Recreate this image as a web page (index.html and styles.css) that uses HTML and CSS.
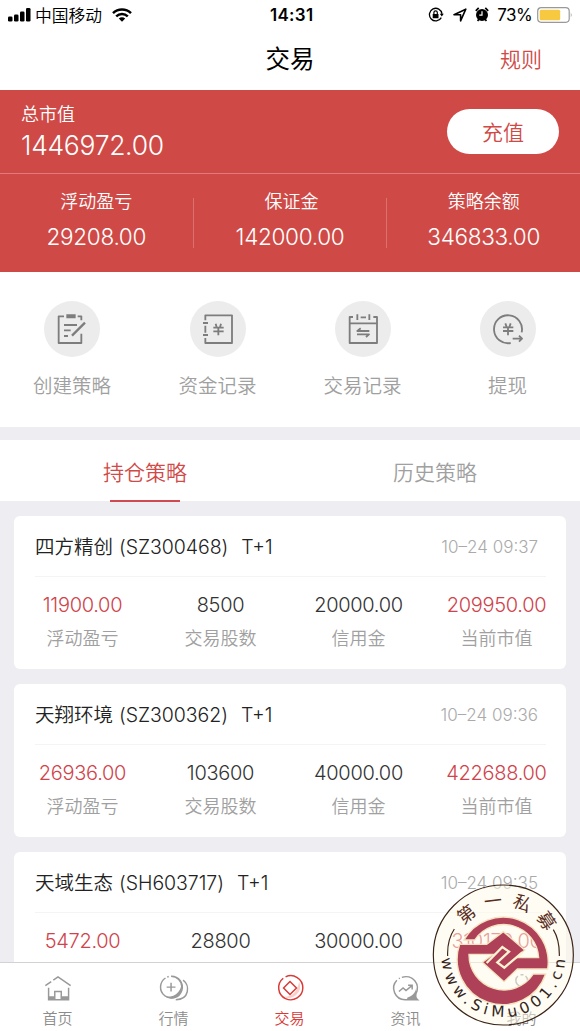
FILE: index.html
```html
<!DOCTYPE html>
<html lang="zh-CN">
	<head>
		<meta charset="utf-8">
		<title>交易</title>
		<link rel="stylesheet" href="styles.css">
	</head>
	<body>
		<div class="status">
			<svg class="signal" width="23" height="16" viewBox="0 0 23 16">
				<rect x="0" y="9.500" width="4.500" height="5" rx="1.300"/>
				<rect x="6" y="7.500" width="4.500" height="7" rx="1.300"/>
				<rect x="12" y="4.500" width="4.500" height="10" rx="1.300"/>
				<rect x="18" y="1" width="4.500" height="13.500" rx="1.300"/>
			</svg>
			<span class="carrier">中国移动</span>
			<svg class="wifi" width="20" height="14" viewBox="0 0 20 14">
				<path d="M1 5.200C6 .4 14 .4 19 5.200M4.200 8.400c3.400-3.200 8.200-3.200 11.600 0" fill="none" stroke="#000" stroke-width="2.500"/>
				<path d="M6.800 10.500c1.900-1.700 4.500-1.700 6.400 0L10 13.700z"/>
			</svg>
			<b class="time">14:31</b>
			<div class="status_r">
				<svg width="16" height="16" viewBox="0 0 16 16">
					<path d="M13.300 10.600A6.300 6.300 0 1 1 14 6.800" fill="none" stroke="#000" stroke-width="1.300"/>
					<path d="M11.800 6.700h4L13.800 9.500zM4.700 7h5.800v4.300H4.700z"/>
					<path d="M5.900 7V5.500a1.700 1.700 0 0 1 3.400 0V7" fill="none" stroke="#000" stroke-width="1.200"/>
				</svg>
				<svg class="arrow" width="14" height="14" viewBox="0 0 14 14">
					<path d="M1 6.800L12.800 1.200 7.600 12.800V6.800z" fill="none" stroke="#000" stroke-width="1.600" stroke-linejoin="round"/>
				</svg>
				<svg class="clock" width="14" height="15" viewBox="0 0 14 15">
					<circle cx="7" cy="8" r="6"/>
					<path d="M.8 3.800L3.700.9M13.200 3.800L10.300.9M2.600 14l1.500-2M11.400 14l-1.500-2" stroke="#000" stroke-width="1.700"/>
					<path d="M7 4.300V8.200H4.300" fill="none" stroke="#fff" stroke-width="1.200"/>
				</svg>
				<span class="percent">73%</span>
				<svg width="36" height="16" viewBox="0 0 36 16">
					<rect x=".7" y=".7" width="31.500" height="14.600" rx="3.500" fill="#fff" stroke="#999" stroke-width="1.200"/>
					<rect x="2.700" y="2.700" width="20.500" height="10.600" rx="1.500" fill="#f6c940"/>
					<path d="M33.800 5.500q1.800 2.500 0 5z" fill="#999"/>
				</svg>
			</div>
		</div>
		<div class="nav">
			<h1>交易</h1>
			<span class="rule">规则</span>
		</div>

		<div class="asset">
			<div class="total">
				<div>
					<p class="total_name">总市值</p>
					<p class="total_num">1446972.00</p>
				</div>
				<button type="button">充值</button>
			</div>
			<ul class="detail">
				<li><p>浮动盈亏</p><strong>29208.00</strong></li>
				<li><p>保证金</p><strong>142000.00</strong></li>
				<li><p>策略余额</p><strong>346833.00</strong></li>
			</ul>
		</div>

		<ul class="menu">
			<li>
				<svg viewBox="0 0 168 168">
					<path d="M60 46H44V126H112V98M101 46H112V58M60 72H99M60 88H80M60 105H72"/>
					<path class="bold" d="M123 65L84 104"/>
					<path class="fill" d="M67 40h28v12h-28z"/>
				</svg>
				<span>创建策略</span>
			</li>
			<li>
				<svg viewBox="0 0 168 168">
					<path d="M46 58V43H126V126H46V111M46 74V95M39 66H54M39 102H54"/>
					<path d="M77 68l3 11M93 68l-3 11M70 80H101M70 91H101M85 78V103"/>
				</svg>
				<span>资金记录</span>
			</li>
			<li>
				<svg viewBox="0 0 168 168">
					<path d="M54 48H44V126H126V48H115M44 67H126M67 40V57M103 40V57M77 49H93"/>
					<path d="M103 90H67L77 82M66 100H102L93 108"/>
				</svg>
				<span>交易记录</span>
			</li>
			<li>
				<svg viewBox="0 0 168 168">
					<path d="M92 126A42 42 0 1 1 125 94M98 113H125M117 104L126 113L117 122"/>
					<path d="M76 67l4 11M92 67l-4 11M69 79H100M69 90H100M84 78V103"/>
				</svg>
				<span>提现</span>
			</li>
		</ul>

		<div class="tab">
			<div class="current"><span>持仓策略</span></div>
			<div><span>历史策略</span></div>
		</div>

		<div class="list">
			<div class="card">
				<div class="card_hd">
					<h2>四方精创<em>(SZ300468)</em><i>T+1</i></h2>
					<span>10–24 09:37</span>
				</div>
				<ul class="card_bd">
					<li class="red"><b>11900.00</b><p>浮动盈亏</p></li>
					<li><b>8500</b><p>交易股数</p></li>
					<li><b>20000.00</b><p>信用金</p></li>
					<li class="red"><b>209950.00</b><p>当前市值</p></li>
				</ul>
			</div>
			<div class="card">
				<div class="card_hd">
					<h2>天翔环境<em>(SZ300362)</em><i>T+1</i></h2>
					<span>10–24 09:36</span>
				</div>
				<ul class="card_bd">
					<li class="red"><b>26936.00</b><p>浮动盈亏</p></li>
					<li><b>103600</b><p>交易股数</p></li>
					<li><b>40000.00</b><p>信用金</p></li>
					<li class="red"><b>422688.00</b><p>当前市值</p></li>
				</ul>
			</div>
			<div class="card">
				<div class="card_hd">
					<h2>天域生态<em>(SH603717)</em><i>T+1</i></h2>
					<span>10–24 09:35</span>
				</div>
				<ul class="card_bd">
					<li class="red"><b>5472.00</b></li>
					<li><b>28800</b></li>
					<li><b>30000.00</b></li>
					<li class="red"><b>310170.00</b></li>
				</ul>
			</div>
		</div>

		<ul class="footer">
			<li>
				<svg viewBox="0 0 102 102">
					<path d="M8 43L28 29M35 24L51 13L94 43M19 50V91H87V50M40 88V63H62V88"/>
					<path class="fill" d="M19 79H38V92H19zM64 79H87V92H64z"/>
				</svg>
				<span>首页</span>
			</li>
			<li>
				<svg viewBox="0 0 102 102">
					<path d="M22 17A37 37 0 1 0 41 11M28 14L33 12M41 11A37 37 0 0 1 78 48M41 33V63M26 48H56"/>
					<path class="fill" d="M76 36A37 37 0 0 1 18 78A44 44 0 0 0 76 36z"/>
					<path d="M82 24C106 42 104 90 57 91"/>
				</svg>
				<span>行情</span>
			</li>
			<li class="on">
				<svg viewBox="0 0 102 102">
					<path d="M82 30A39 39 0 0 1 30 81Q72 82 82 30z" fill="#f9d0cc" stroke="none"/>
					<path d="M28 18A41 41 0 1 0 36 13M51 29L73 51L51 73L29 51z"/>
				</svg>
				<span>交易</span>
			</li>
			<li>
				<svg viewBox="0 0 102 102">
					<path d="M20 25A39 39 0 0 0 49 91H90Q81 84 84 72A39 39 0 0 0 37 15M27 19L30 17M27 63L41 51L51 60L71 43M58 42H72V56"/>
					<path class="fill" d="M86 48C85 68 71 80 55 84V92H94Q83 86 86 74z"/>
				</svg>
				<span>资讯</span>
			</li>
			<li>
				<svg viewBox="0 0 102 102">
					<path d="M37 10A20 20 0 1 0 63 10M46 6L56 6M74 62Q84 70 88 88"/>
				</svg>
				<span>我的</span>
			</li>
		</ul>

		<!-- 右下角印章 -->
		<svg class="seal" viewBox="0 0 465 468">
			<defs>
				<path id="arc_top" d="M90 240A145 145 0 0 1 380 240"/>
				<path id="arc_btm" d="M49 240A186 186 0 0 0 421 240"/>
			</defs>
			<circle class="paper" cx="235" cy="240" r="210"/>
			<path class="line" d="M68 243Q66 195 88 162M403 243Q404 195 385 164"/>
			<g class="logo">
				<path d="M117 195A135 135 0 0 1 368 282H277L237 320L172 262L205 238H132A105 105 0 0 0 325 297H362A135 135 0 0 1 104 208H185L235 170L299 225L275 248H341A105 105 0 0 0 149 195z"/>
				<path class="gap" d="M185 264L232 216L252 230L217 262L238 278L292 232"/>
			</g>
			<text class="seal_cn"><textPath href="#arc_top" startOffset="55%">第一私募</textPath></text>
			<text class="seal_en"><textPath href="#arc_btm" startOffset="51%">www.SiMu001.cn</textPath></text>
		</svg>
	</body>
</html>
```
FILE: styles.css
```css
*{
	margin: 0;
	padding: 0;
	box-sizing: border-box;
}
body{
	display: flex;
	flex-direction: column;
	position: relative;
	width: 580px;
	height: 1031px;
	overflow: hidden;
	background-color: #eeedf2;
	font-family: Inter, "Noto Sans CJK SC", sans-serif;
	font-weight: 350;
	color: #333;
}
ul{
	list-style: none;
}
i,em{
	font-style: normal;
}
.status{
	display: flex;
	align-items: center;
	flex: none;
	height: 29px;
	padding: 0 7px 0 8px;
	background-color: #fff;
	color: #000;
}
.carrier{
	width: 68px;
	margin: 0 9px 0 4px;
	font-size: 16.800px;
	white-space: nowrap;
}
.time{
	margin-left: 138px;
	font-size: 17px;
	font-weight: 600;
	letter-spacing: .300px;
}
.status_r{
	display: flex;
	align-items: center;
	margin-left: auto;
}
.arrow{
	margin: 0 8px 0 9px;
}
.percent{
	margin: 0 5px 0 8px;
	font-size: 17px;
	font-weight: 400;
	letter-spacing: -.600px;
}
.nav{
	display: grid;
	grid-template-columns: 1fr auto 1fr;
	align-items: center;
	flex: none;
	height: 61px;
	background-color: #fff;
}
h1{
	grid-column: 2;
	font-size: 24.500px;
	font-weight: 400;
	line-height: 59px;
	color: #000;
}
.rule{
	justify-self: end;
	margin-right: 38px;
	font-size: 21px;
	line-height: 58px;
	color: #d04a47;
}
.asset{
	flex: none;
	height: 182px;
	background-color: #cf4a46;
	color: #fff;
}
.total{
	display: flex;
	justify-content: space-between;
	height: 84px;
	padding: 13px 21px 0;
	border-bottom: 1px solid #df7c79;
}
.total_name{
	font-size: 18px;
	line-height: 24px;
}
.total_num{
	font-size: 26.500px;
	line-height: 36px;
	letter-spacing: -.300px;
}
.total button{
	width: 112px;
	height: 45px;
	margin-top: 6px;
	padding-bottom: 2px;
	border: 0;
	border-radius: 23px;
	background-color: #fff;
	font-family: inherit;
	font-size: 21px;
	font-weight: 350;
	color: #cf4a46;
}
.detail{
	display: flex;
	padding-top: 24px;
}
.detail li{
	width: 194px;
	height: 50px;
	border-left: 1px solid #dc706d;
	text-align: center;
}
.detail li:first-child{
	width: 193px;
	border: 0;
}
.detail p{
	margin-top: -9px;
	font-size: 18px;
	line-height: 26px;
}
.detail li:nth-child(2) p{
	padding-left: 3px;
}
.detail strong{
	font-size: 22.500px;
	font-weight: 350;
	line-height: 44px;
	letter-spacing: -.300px;
}
.menu{
	display: flex;
	flex: none;
	height: 155px;
	padding-top: 29px;
	background-color: #fff;
}
.menu li{
	display: flex;
	flex-direction: column;
	align-items: center;
	width: 145px;
}
.menu li:first-child{
	padding-right: 1px;
}
.menu svg{
	width: 56px;
	height: 56px;
	border-radius: 50%;
	background-color: #ececec;
	fill: none;
	stroke: #7d7d7d;
	stroke-width: 5.500;
	stroke-linejoin: round;
}
.menu .bold{
	stroke-width: 7;
}
.menu .fill{
	fill: #7d7d7d;
	stroke: none;
}
.menu span{
	margin-top: 15px;
	font-size: 19.500px;
	line-height: 28px;
	color: #a0a0a0;
}
.tab{
	display: flex;
	flex: none;
	height: 61px;
	margin-top: 13px;
	background-color: #fff;
}
.tab div{
	display: flex;
	flex-direction: column;
	align-items: center;
	width: 290px;
	font-size: 21px;
	line-height: 66px;
	color: #a0a0a0;
}
.tab .current{
	color: #d04a47;
}
.tab .current::after{
	content: "";
	flex: none;
	width: 70px;
	height: 2px;
	margin-top: -6px;
	background-color: #cf4a52;
}
.list{
	flex: 1;
	min-height: 0;
	overflow: hidden;
	padding: 15px 14px 0;
}
.card{
	height: 153px;
	margin-bottom: 15px;
	border-radius: 6px;
	background-color: #fff;
}
.card_hd{
	display: flex;
	justify-content: space-between;
	height: 61px;
	margin: 0 20px 0 21px;
	padding-right: 8px;
	border-bottom: 1px solid #f4f4f4;
	line-height: 62px;
}
.card_hd h2{
	font-size: 19.500px;
	font-weight: 350;
	color: #222;
}
.card_hd em{
	margin: 0 13px 0 6px;
	letter-spacing: -.050px;
}
.card_hd span{
	font-size: 17px;
	color: #aaa;
}
.card_bd{
	display: flex;
}
.card_bd li{
	width: 138px;
	padding-right: 1px;
	text-align: center;
}
.card_bd b{
	display: block;
	margin-top: 10px;
	font-size: 20px;
	font-weight: 350;
	line-height: 36px;
	letter-spacing: -.300px;
}
.card_bd p{
	font-size: 18px;
	line-height: 32px;
	color: #a0a0a0;
}
.red b{
	color: #d0434b;
}
.footer{
	display: flex;
	flex: none;
	height: 69px;
	border-top: 1px solid #d2d2d2;
	background-color: #fff;
}
.footer li{
	display: flex;
	flex-direction: column;
	align-items: center;
	width: 116px;
	padding: 10px 1px 0 0;
	font-size: 15px;
	line-height: 24px;
	color: #8c8c8c;
}
.footer svg{
	width: 34px;
	height: 34px;
	margin-bottom: 4px;
	fill: none;
	stroke: #999;
	stroke-width: 5;
}
.footer .fill{
	fill: #999;
	stroke: none;
}
.footer .on{
	color: #d93a36;
}
.footer .on svg{
	stroke: #d93a36;
}
.seal{
	position: absolute;
	left: 425px;
	top: 875px;
	width: 155px;
	height: 156px;
}
.seal .paper{
	fill: rgba(255,252,232,.5);
	stroke: #3b2418;
	stroke-width: 3.500;
}
.seal .line{
	fill: none;
	stroke: #3b2418;
	stroke-width: 3.500;
}
.logo{
	fill: #ae4058;
	stroke: #f5e3c0;
	stroke-width: 4;
}
.logo .gap{
	fill: none;
	stroke: #fff3d2;
	stroke-width: 7;
}
.seal_cn{
	fill: #5a2d22;
	font-size: 54px;
	font-weight: 400;
	letter-spacing: 25px;
	text-anchor: middle;
}
.seal_en{
	fill: #33241c;
	font-family: "DejaVu Sans", sans-serif;
	font-size: 46px;
	font-weight: 400;
	letter-spacing: 13px;
	text-anchor: middle;
}
```
